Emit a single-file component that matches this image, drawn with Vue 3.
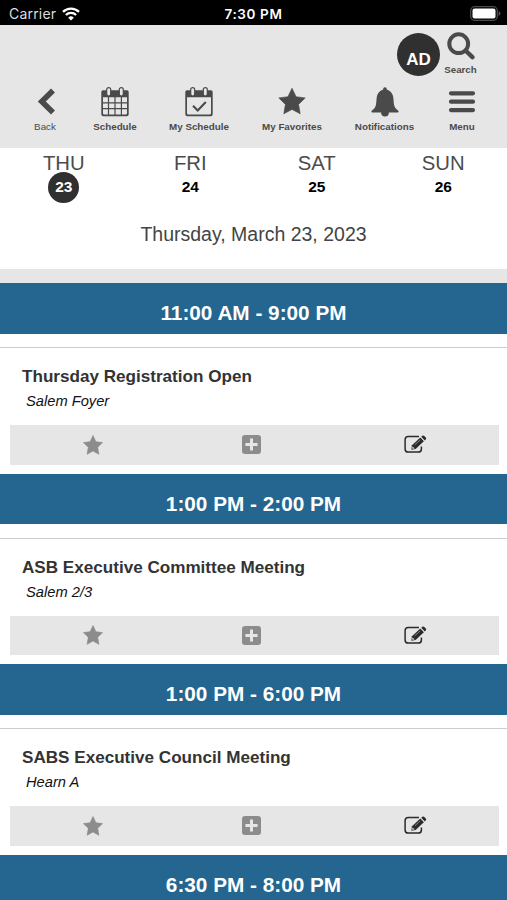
<script setup>
const nav = [
  { icon: 'back', label: 'Back' },
  { icon: 'schedule', label: 'Schedule' },
  { icon: 'mine', label: 'My Schedule' },
  { icon: 'star', label: 'My Favorites' },
  { icon: 'bell', label: 'Notifications' },
  { icon: 'menu', label: 'Menu' },
]
const days = [
  { name: 'THU', date: 23, active: true },
  { name: 'FRI', date: 24 },
  { name: 'SAT', date: 25 },
  { name: 'SUN', date: 26 },
]
const sessions = [
  { time: '11:00 AM - 9:00 PM', title: 'Thursday Registration Open', place: 'Salem Foyer' },
  { time: '1:00 PM - 2:00 PM', title: 'ASB Executive Committee Meeting', place: 'Salem 2/3' },
  { time: '1:00 PM - 6:00 PM', title: 'SABS Executive Council Meeting', place: 'Hearn A' },
  { time: '6:30 PM - 8:00 PM' },
]
</script>

<template>
  <div class="screen">
    <div class="status">
      <div class="carrier">
        <span>Carrier</span>
        <svg class="wifi" viewBox="0 0 18 14" fill="none" stroke="#fff" stroke-width="2.3">
          <path d="M1 4.9a11.5 11.5 0 0 1 16 0M3.9 8a7.3 7.3 0 0 1 10.2 0" />
          <path d="M9 13.6L6.2 10.7a4 4 0 0 1 5.6 0z" fill="#fff" stroke="none" />
        </svg>
      </div>
      <span class="clock">7:30 PM</span>
      <svg class="battery" viewBox="0 0 31 15">
        <rect x=".7" y=".7" width="26.6" height="13.6" rx="4" fill="none" stroke="#4c4c4c" stroke-width="1.3" />
        <rect x="2.5" y="2.5" width="23" height="10" rx="2" fill="#fff" />
        <path d="M28.6 5v5q1.8-.8 1.8-2.5T28.6 5z" fill="#555" />
      </svg>
    </div>

    <header class="header">
      <div class="top">
        <div class="avatar"><span>AD</span></div>
        <div class="search">
          <svg viewBox="0 0 28 28" fill="none" stroke="#4a4a4a" stroke-linecap="round">
            <circle cx="11.7" cy="11.7" r="9.4" stroke-width="4" />
            <path d="M19 19l6.4 6.2" stroke-width="4.4" />
          </svg>
          <span>Search</span>
        </div>
      </div>
      <nav class="nav">
        <div v-for="item in nav" :key="item.icon" class="nav-item" :class="item.icon">
          <svg viewBox="0 0 30 30" fill="#4a4a4a">
            <path v-if="item.icon === 'back'" d="M23 3.6L11.8 14.6 23 25.600" fill="none" stroke="#4a4a4a" stroke-width="5.600" />
            <template v-if="item.icon === 'schedule' || item.icon === 'mine'">
              <path fill-rule="evenodd" d="M3 3.2h24q1.7 0 1.7 1.8v22.3q0 2-2 2H3.3q-2 0-2-2V5q0-1.8 1.7-1.8zM3 10.3v16q0 1.3 1.3 1.3h21.4q1.3 0 1.3-1.3v-16z" />
              <rect x="6.7" y=".6" width="4" height="8.4" rx="2" fill="#e6e6e6" stroke="#4a4a4a" stroke-width="1.2" />
              <rect x="19.3" y=".6" width="4" height="8.4" rx="2" fill="#e6e6e6" stroke="#4a4a4a" stroke-width="1.2" />
              <path v-if="item.icon === 'schedule'" d="M8.5 10v18M15 10v18M21.4 10v18M2.5 15.8h25M2.5 21.7h25" fill="none" stroke="#4a4a4a" stroke-width="1.2" />
              <path v-else d="M9 18.8l4.7 4.6 8.1-8.4" fill="none" stroke="#4a4a4a" stroke-width="2.1" />
            </template>
            <path v-if="item.icon === 'star'" stroke="#4a4a4a" stroke-width=".6" stroke-linejoin="round" d="M15 1.2l4.1 8.5 9.1 1.200-6.600 6.500 1.600 9.400L15 22.400l-8.200 4.400 1.600-9.400-6.600-6.500 9.100-1.200z" />
            <path v-if="item.icon === 'bell'" d="M15 .3c1.200 0 1.800.9 1.800 2.200C20.600 3.700 22.800 6.400 23.300 10.500c.5 4.200.3 7.300 1.600 9.700.9 1.600 2.200 2.600 3.500 3.600q.7 1.400-.6 1.700H18.900a3.900 3.900 0 0 1-7.800 0H2.200q-1.300-.3-.6-1.700c1.300-1 2.600-2 3.500-3.600 1.300-2.400 1.100-5.500 1.600-9.700C7.200 6.400 9.400 3.700 13.200 2.500 13.200 1.200 13.800.3 15 .3z" />
            <path v-if="item.icon === 'menu'" d="M4 6.300h22M4 14.700h22M4 23.100h22" fill="none" stroke="#4a4a4a" stroke-width="4.200" stroke-linecap="round" />
          </svg>
          <span>{{ item.label }}</span>
        </div>
      </nav>
    </header>

    <section class="days">
      <div v-for="d in days" :key="d.name" class="day">
        <span class="name">{{ d.name }}</span>
        <span class="date" :class="{ active: d.active }">{{ d.date }}</span>
      </div>
    </section>
    <div class="full-date">Thursday, March 23, 2023</div>
    <div class="divider"></div>

    <section v-for="s in sessions" :key="s.time" class="session">
      <h2>{{ s.time }}</h2>
      <article v-if="s.title">
        <h3>{{ s.title }}</h3>
        <p>{{ s.place }}</p>
        <div class="actions">
          <svg class="fav" viewBox="0 0 20 20" fill="#8c8c8c">
            <path stroke="#8c8c8c" stroke-width=".6" stroke-linejoin="round" d="M10 .5l2.900 6.200 6.700.9-4.900 4.700 1.200 7L10 16l-5.900 3.300 1.200-7L.4 7.600l6.700-.9z" />
          </svg>
          <svg class="add" viewBox="0 0 19 19">
            <rect width="19" height="19" rx="3" fill="#8c8c8c" />
            <path d="M9.500 3.400v12.200M3.400 9.500h12.200" stroke="#e6e6e6" stroke-width="3" />
          </svg>
          <svg class="edit" viewBox="0 0 23 19">
            <path d="M15 1.600H4.300Q1.100 1.600 1.100 4.800v9.100q0 3.200 3.200 3.200h9.900q3.200 0 3.200-3.200v-2.400" fill="none" stroke="#2b2b2b" stroke-width="1.500" />
            <path d="M8 10.200L16.300 2.500l3.600 3.800-8.300 7.600-4.300.8z" fill="#2b2b2b" />
            <path d="M17.300 1.700l1-.9q1-.8 2 .1l1.500 1.600q.9 1-.1 2l-.9.900z" fill="#2b2b2b" />
            <path d="M10.800 9.800l5.300-4.900" stroke="#aaa" stroke-width=".7" />
            <path d="M8.600 11.400l2 2-1.900.4-.6-.6z" fill="#e6e6e6" />
          </svg>
        </div>
      </article>
    </section>
  </div>
</template>

<style>
body {
  margin: 0;
  overflow: hidden;
}
</style>

<style scoped>
.screen {
  width: 507px;
  height: 900px;
  overflow: hidden;
  background: #fff;
  font-family: "Liberation Sans", Arial, sans-serif;
  color: #333;
}
.status {
  display: grid;
  grid-template-columns: 1fr auto 1fr;
  align-items: center;
  height: 25px;
  padding: 2px 6px 0 9px;
  box-sizing: border-box;
  background: #000;
  color: #fff;
  font: 500 13.5px/20px Inter, sans-serif;
}
.carrier {
  display: flex;
  align-items: center;
  gap: 6px;
  font-weight: 400;
  font-size: 14px;
  letter-spacing: 0.2px;
  color: #ddd;
}
.wifi {
  width: 18px;
  height: 14px;
}
.clock {
  margin-right: 3px;
  font-weight: 600;
  letter-spacing: 0.6px;
}
.battery {
  width: 31px;
  height: 15px;
  justify-self: end;
}
.header {
  height: 122.5px;
  background: #e6e6e6;
}
.top {
  display: flex;
  justify-content: flex-end;
  gap: 4px;
  height: 62px;
  padding: 7px 30px 0 0;
  box-sizing: border-box;
}
.avatar {
  display: flex;
  justify-content: center;
  width: 43px;
  height: 43px;
  margin-top: 1px;
  border-radius: 50%;
  background: #303030;
  color: #fff;
  font: bold 17px/19px "Liberation Sans", sans-serif;
}
.avatar span {
  padding-top: 16.5px;
}
.search {
  display: flex;
  flex-direction: column;
  align-items: center;
  width: 33px;
  font: bold 9.7px/12px "Liberation Sans", sans-serif;
  color: #4a4a4a;
}
.search svg {
  width: 28px;
  height: 28px;
  margin-bottom: 4px;
}
.nav {
  display: grid;
  grid-template-columns: 70px 70px 98px 88px 97px 58px;
  padding-left: 10px;
}
.nav-item {
  display: flex;
  flex-direction: column;
  align-items: center;
  font: bold 9.8px/12px "Liberation Sans", sans-serif;
  color: #4a4a4a;
}
.nav-item.back {
  font-weight: normal;
}
.nav-item svg {
  width: 30px;
  height: 30px;
  margin-bottom: 4px;
}
.nav-item span {
  white-space: nowrap;
}
.days {
  display: grid;
  grid-template-columns: repeat(4, 126.5px);
  height: 71.5px;
  padding: 4px 0 0 0.5px;
  box-sizing: border-box;
}
.day {
  display: flex;
  flex-direction: column;
  align-items: center;
}
.name {
  font-size: 20.3px;
  line-height: 22px;
  color: #4c4c4c;
}
.date {
  width: 31px;
  height: 31px;
  margin-top: -2px;
  border-radius: 50%;
  font-size: 15.5px;
  font-weight: bold;
  line-height: 30px;
  text-align: center;
  color: #000;
}
.date.active {
  background: #303030;
  color: #fff;
}
.full-date {
  height: 50px;
  font-size: 19.5px;
  line-height: 30px;
  text-align: center;
  color: #444;
}
.divider {
  height: 14px;
  background: #e6e6e6;
}
.session {
  height: 190.55px;
}
h2 {
  height: 50.5px;
  margin: 0;
  padding-top: 4px;
  box-sizing: border-box;
  background: #24668f;
  color: #fff;
  font-size: 20.75px;
  line-height: 51px;
  text-align: center;
}
article {
  margin-top: 13.5px;
  padding: 17px 9.5px 0;
  border-top: 1.5px solid #ccc;
}
h3 {
  margin: 0 12.5px;
  font-size: 17.1px;
  line-height: 24px;
}
p {
  margin: 0 16.5px 12px;
  font-size: 14.7px;
  font-style: italic;
  line-height: 24px;
  color: #111;
}
.actions {
  display: grid;
  grid-template-columns: 166px 152px 175px;
  align-items: center;
  justify-items: center;
  height: 39.5px;
  width: 489px;
  background: #e6e6e6;
}
.fav {
  width: 20px;
  height: 20px;
}
.add {
  width: 19px;
  height: 19px;
}
.edit {
  width: 23px;
  height: 19px;
}
</style>
